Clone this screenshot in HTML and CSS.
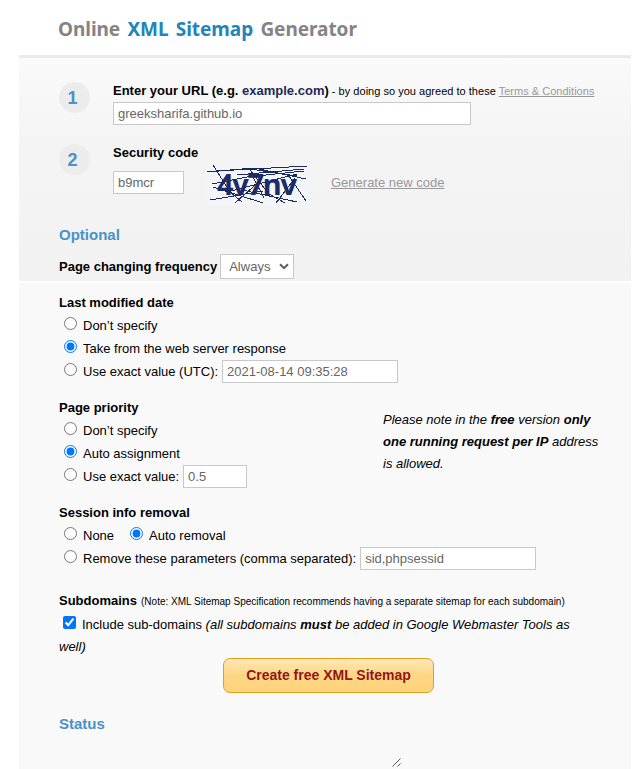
FILE: index.html
```html
<!DOCTYPE html>
<html lang="en">
<head>
<meta charset="utf-8">
<title>Online XML Sitemap Generator</title>
<link rel="stylesheet" href="styles.css">
</head>
<body>
<main class="page">
  <header class="header"><h1 class="title">Online <span>XML Sitemap</span> Generator</h1></header>
  <form>
    <section class="required">
      <div class="step step-url">
        <span class="num">1</span>
        <div class="field">
          <div class="line"><b>Enter your URL (e.g. <span class="example">example.com</span>)</b><span class="terms"> - by doing so you agreed to these <a class="link" href="#">Terms &amp; Conditions</a></span></div>
          <input class="box url" type="text" value="greeksharifa.github.io">
        </div>
      </div>
      <div class="step step-code">
        <span class="num">2</span>
        <div class="field">
          <div class="line"><b>Security code</b></div>
          <div class="code-row">
            <input class="box code" type="text" value="b9mcr">
            <svg class="captcha" width="100" height="40" viewBox="0 0 100 40">
              <rect width="100" height="40" fill="#f3f5f9"/>
              <text class="captcha-text" x="10" y="30" textLength="80" lengthAdjust="spacing">4v7nv</text>
              <path class="scribble" d="M0 6.500L100 1M0 7L47 3L99 14M30 10L97 4M36 3L90 11M6 0L23 27L35 37M3 35L56 26M6 22L56 38M5 19L40 12L97 6M20 27L90 9M28 38L55 14M35 25L90 37M43 5L62 29L78 38M69 38L88 13M82 11L99 36M45 10L57 33"/>
            </svg>
            <a class="link new-code" href="#">Generate new code</a>
          </div>
        </div>
      </div>
      <h2 class="heading">Optional</h2>
      <div class="frequency"><b>Page changing frequency</b>
        <span class="select">Always<svg width="10" height="7" viewBox="0 0 10 7"><path d="M1 1.200L5 5.200L9 1.200" fill="none" stroke="#5c5c5c" stroke-width="2"/></svg></span>
      </div>
    </section>
    <section class="options">
      <div class="group">
        <div class="row head">Last modified date</div>
        <label class="row"><input type="radio" name="date">Don’t specify</label>
        <label class="row"><input type="radio" name="date" checked>Take from the web server response</label>
        <label class="row"><input type="radio" name="date">Use exact value (UTC):<input class="box date" type="text" value="2021-08-14 09:35:28"></label>
      </div>
      <div class="split">
        <div class="group priority">
          <div class="row head">Page priority</div>
          <label class="row"><input type="radio" name="priority">Don’t specify</label>
          <label class="row"><input type="radio" name="priority" checked>Auto assignment</label>
          <label class="row"><input type="radio" name="priority">Use exact value:<input class="box small" type="text" value="0.5"></label>
        </div>
        <p class="note">Please note in the <b>free</b> version <b>only<br>one running request per IP</b> address<br>is allowed.</p>
      </div>
      <div class="group session">
        <div class="row head">Session info removal</div>
        <div class="row"><label class="row none"><input type="radio" name="session">None</label><label class="row"><input type="radio" name="session" checked>Auto removal</label></div>
        <label class="row"><input type="radio" name="session">Remove these parameters (comma separated):<input class="box params" type="text" value="sid,phpsessid"></label>
      </div>
      <div class="subdomains">
        <div class="row head">Subdomains<small>(Note: XML Sitemap Specification recommends having a separate sitemap for each subdomain)</small></div>
        <label class="row include"><input type="checkbox" checked><span>Include sub-domains <i>(all subdomains <b>must</b> be added in Google Webmaster Tools as</i></span></label>
        <div class="well"><i>well)</i></div>
      </div>
      <button class="create" type="button">Create free XML Sitemap</button>
      <h2 class="heading status">Status</h2>
      <svg class="grip" width="9" height="9" viewBox="0 0 9 9"><path d="M.5 8.500L8.500 .5M5.500 8.500L8.500 5.500" stroke="#555" stroke-width="1"/></svg>
    </section>
  </form>
</main>
</body>
</html>
```
FILE: styles.css
```css
* { box-sizing: border-box; }
body { margin: 0; background: #fff; color: #000; font: 13px/23px "Liberation Sans", Arial, sans-serif; overflow: hidden; }
h1, h2, p { margin: 0; }
.page { width: 612px; margin-left: 19px; height: 769px; overflow: hidden; }
.header { height: 58px; padding: 14px 0 0 39px; border-bottom: 3px solid #eaeaea; }
.title { font: bold 19px/30px "Noto Sans", sans-serif; color: #848484; letter-spacing: -0.05px; word-spacing: 2.4px; white-space: nowrap; }
.title span { color: #2185b8; }
.required { height: 223px; padding: 22px 0 0 40px; background: linear-gradient(#fafafa, #f4f4f4 40%, #f2f2f2); }
.step { display: flex; }
.step-url { height: 62px; }
.step-code { height: 83px; }
.num { width: 31px; height: 31px; margin-top: 2px; margin-right: 23px; padding-right: 4px; border-radius: 50%; background: #ececec; color: #4a92c8; font-size: 18px; font-weight: bold; line-height: 32px; text-align: center; }
.line { height: 22px; line-height: 21px; white-space: nowrap; }
.terms { font-size: 11px; letter-spacing: 0.02px; }
.example { color: #1d2a5e; }
.link { color: #999; text-decoration: underline; }
.box { height: 23px; margin: 0; padding: 0 4px; border: 1px solid #c8c8c8; border-radius: 0; outline: 0; background: #fff; color: #666; font: 13px "Liberation Sans", Arial, sans-serif; }
.url { display: block; width: 358px; }
.code-row { display: flex; align-items: flex-start; }
.code { width: 71px; margin-top: 7px; }
.captcha { margin: 1px 24px 0 23px; }
.captcha-text { fill: #1b2c68; font: bold 29px "Noto Sans", sans-serif; }
.scribble { fill: none; stroke: #1a2a60; stroke-width: 1; shape-rendering: crispEdges; }
.new-code { margin-top: 7px; }
.heading { color: #4a92c8; font-size: 15px; line-height: 20px; }
.frequency { display: flex; align-items: center; height: 26px; margin-top: 8px; }
.select { display: flex; align-items: center; justify-content: space-between; width: 74px; height: 25px; margin-left: 3px; padding: 0 4px 0 8px; border: 1px solid #c8c8c8; background: #fff; color: #666; }
.options { height: 488px; margin-top: 2px; padding: 8px 0 0 40px; background: #f9f9f9; }
.row { display: flex; align-items: center; height: 23px; white-space: nowrap; }
.head { font-weight: bold; }
input[type="radio"], input[type="checkbox"] { width: 13px; height: 13px; margin: 0 6px 4px 5px; flex: none; }
input[type="checkbox"] { margin: 0 6px 4px 4px; }
.row .box { margin-left: 4px; }
.date { width: 176px; }
.split { display: flex; margin-top: 13px; }
.priority { width: 324px; }
.note { padding-top: 13px; font-style: italic; line-height: 22px; white-space: nowrap; }
.small { width: 64px; }
.session { margin-top: 13px; }
.none { width: 66px; }
.params { width: 176px; }
.subdomains { margin-top: 19px; }
.head small { margin: 2px 0 0 4px; font-size: 10px; font-weight: normal; }
.include { margin-top: 1px; }
.well { height: 22px; line-height: 22px; }
.create { display: block; width: 211px; height: 35px; margin-left: 164px; padding: 0 0 2px; border: 1px solid #e2a01b; border-radius: 7px; background: linear-gradient(#ffe7b5, #fed684 50%, #fed37b); color: #921616; font: bold 14px "Liberation Sans", Arial, sans-serif; }
.status { margin-top: 21px; }
.grip { display: block; margin: 24px 0 0 333px; }
```
